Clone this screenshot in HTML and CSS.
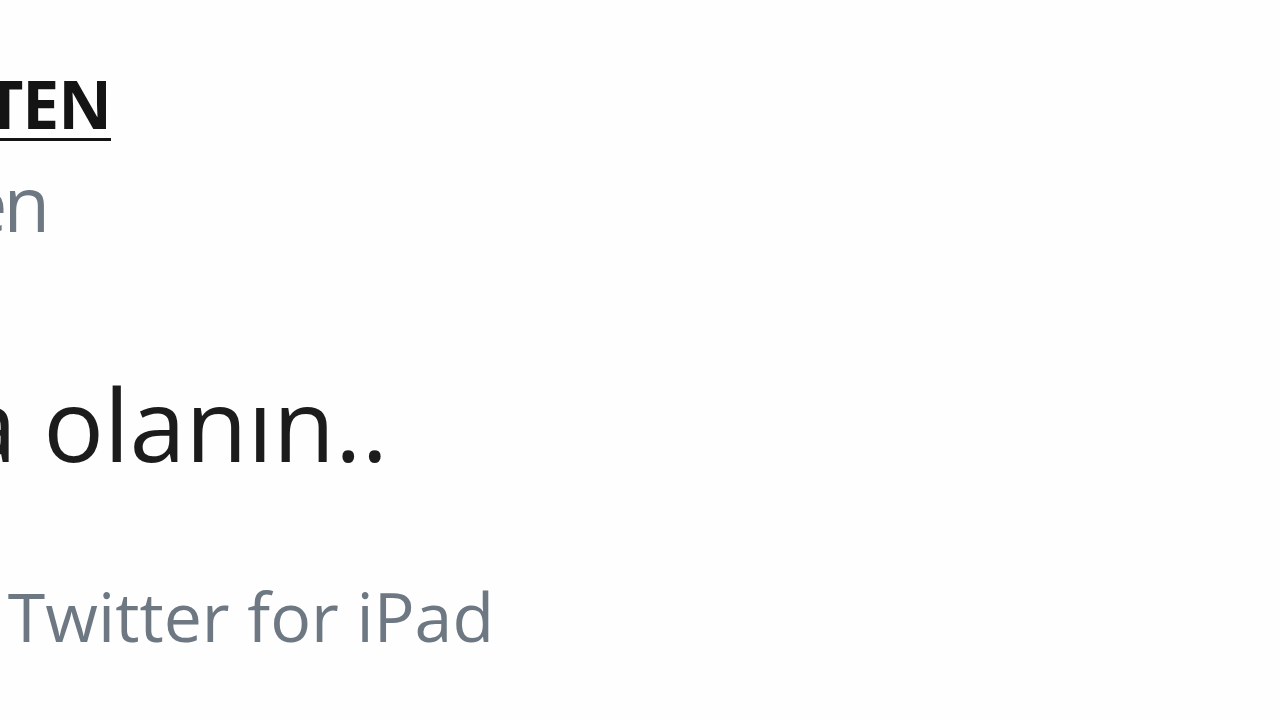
FILE: index.html
```html
<!DOCTYPE html>
<html lang="tr">
<head>
    <meta charset="UTF-8">
    <meta name="viewport" content="width=device-width, initial-scale=1.0">
    <title>Tweet</title>
    <link rel="stylesheet" href="styles.css">
</head>
<body>
    <div class="tweet">
        <div class="row nameRow"><a href="#" class="name">MEHMET ERTEN</a></div>
        <div class="row handleRow"><span class="handle">@mehmeterten</span></div>
        <div class="row textRow"><span class="text">Bir gün senin de olur, sabırla bekleyen için kader hep onda olanın..</span></div>
        <div class="row metaRow"><span class="meta">10:42 ÖS · 12 Mar 2019 · Twitter for iPad</span></div>
    </div>
</body>
</html>
```

FILE: styles.css
```css
html, body {
    margin: 0;
    padding: 0;
    background-color: #fefefe;
    overflow: hidden;
}
body {
    width: 1280px;
    height: 720px;
    font-family: "Open Sans", "Noto Sans", sans-serif;
}
.tweet {
    display: flex;
    flex-direction: column;
}
/* rows end at a fixed x, the start of each line runs off the left edge */
.row {
    display: flex;
    justify-content: flex-end;
    white-space: nowrap;
}
.nameRow {
    width: 111px;
    height: 70px;
    margin-top: 68px;
}
.name {
    font-size: 66px;
    font-weight: 700;
    line-height: 70px;
    color: #141414;
    text-decoration: underline;
    text-decoration-thickness: 3px;
    text-underline-offset: 9px;
    letter-spacing: -1px;
}
.handleRow {
    width: 46px;
    height: 80px;
    margin-top: 25px;
}
.handle {
    font-size: 76px;
    line-height: 80px;
    color: #6e7883;
    letter-spacing: -4px;
}
.textRow {
    width: 388px;
    height: 120px;
    margin-top: 120px;
}
.text {
    font-size: 101px;
    line-height: 120px;
    color: #1c1c1c;
}
.metaRow {
    width: 494px;
    height: 80px;
    margin-top: 93px;
}
.meta {
    font-size: 68px;
    line-height: 80px;
    color: #6e7883;
}
```
